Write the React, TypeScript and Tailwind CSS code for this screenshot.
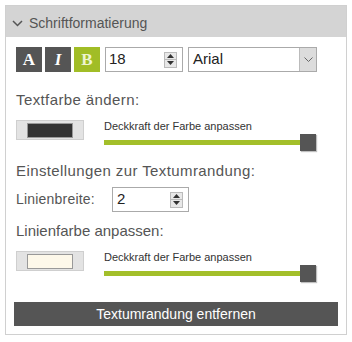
import React from "react";

function Spinner() {
  return (
    <div className="flex flex-col w-[13px] h-[16px] border border-[#bbb] bg-[#e8e8e8]">
      <div className="flex-1 flex items-center justify-center border-b border-[#bbb]">
        <svg width="7" height="4" viewBox="0 0 7 4"><path d="M0 4 L3.5 0 L7 4Z" fill="#333" /></svg>
      </div>
      <div className="flex-1 flex items-center justify-center">
        <svg width="7" height="4" viewBox="0 0 7 4"><path d="M0 0 L3.5 4 L7 0Z" fill="#333" /></svg>
      </div>
    </div>
  );
}

function Slider() {
  return (
    <div className="relative w-[212px] h-[17px] flex items-center">
      <div className="w-[200px] h-[5px] bg-[#a3bf2a]" />
      <div className="absolute right-[0px] top-0 w-[16px] h-[17px] bg-[#555] shadow-[1px_1px_1px_rgba(0,0,0,0.25)]" />
    </div>
  );
}

function Swatch({ color }: { color: string }) {
  return (
    <div className="w-[68px] h-[20px] bg-[#e3e3e3] border border-[#cfcfcf] flex items-center justify-center">
      <div className="w-[46px] h-[15px] border border-[#999]" style={{ backgroundColor: color }} />
    </div>
  );
}

function ColorRow({ color }: { color: string }) {
  return (
    <div className="flex mt-[12px]">
      <Swatch color={color} />
      <div className="ml-[20px] flex flex-col">
        <span className="text-[11px] leading-[13px] text-[#333]">Deckkraft der Farbe anpassen</span>
        <div className="mt-[1px]"><Slider /></div>
      </div>
    </div>
  );
}

export default function App() {
  return (
    <div className="w-[352px] h-[342px] bg-white pt-[5px] pl-[5px] text-[#555]" style={{ fontFamily: '"Liberation Sans", Arial, sans-serif' }}>
      <div className="w-[342px] h-[330px] border border-[#d0d0d0] flex flex-col">
        <div className="h-[31px] bg-[#d4d4d4] flex items-center pl-[6px] gap-[6px] pt-[3px]">
          <svg width="11" height="7" viewBox="0 0 11 7"><path d="M1 1 L5.5 5.5 L10 1" stroke="#555" strokeWidth="1.5" fill="none" /></svg>
          <span className="text-[14px] text-[#555]">Schriftformatierung</span>
        </div>
        <div className="flex flex-col pl-[10px] pr-[7px]">
          <div className="flex items-center mt-[10px] h-[25px]">
            <div className="w-[26px] h-[25px] bg-[#555] text-white flex items-center justify-center font-bold text-[17px]" style={{ fontFamily: '"Liberation Serif", serif' }}>A</div>
            <div className="ml-[3px] w-[26px] h-[25px] bg-[#555] text-white flex items-center justify-center font-bold italic text-[17px]" style={{ fontFamily: '"Liberation Serif", serif' }}>I</div>
            <div className="ml-[3px] w-[26px] h-[25px] bg-[#a1bd26] text-[#eef4d0] flex items-center justify-center font-bold text-[17px]" style={{ fontFamily: '"Liberation Serif", serif' }}>B</div>
            <div className="ml-[5px] w-[78px] h-[25px] border border-[#aaa] flex items-center pl-[3px] pr-[5px] justify-between bg-white">
              <span className="text-[15px] text-[#222]">18</span>
              <Spinner />
            </div>
            <div className="ml-[5px] w-[129px] h-[25px] border border-[#aaa] flex items-center bg-white">
              <span className="flex-1 pl-[4px] text-[15px] text-[#222]">Arial</span>
              <div className="w-[17px] h-full bg-[#dcdcdc] border-l border-[#bbb] flex items-center justify-center">
                <svg width="9" height="5" viewBox="0 0 9 5"><path d="M0.5 0.5 L4.5 4.5 L8.5 0.5" stroke="#666" strokeWidth="1" fill="none" /></svg>
              </div>
            </div>
          </div>

          <div className="mt-[19px] text-[15px] leading-[17px] tracking-[0.4px]">Textfarbe ändern:</div>
          <ColorRow color="#333333" />

          <div className="mt-[11px] text-[15px] leading-[17px] tracking-[0.4px]">Einstellungen zur Textumrandung:</div>
          <div className="flex items-center mt-[8px]">
            <span className="text-[14px] tracking-[0.2px] w-[96px]">Linienbreite:</span>
            <div className="w-[77px] h-[25px] border border-[#aaa] flex items-center pl-[4px] pr-[5px] justify-between bg-white">
              <span className="text-[15px] text-[#222]">2</span>
              <Spinner />
            </div>
          </div>
          <div className="mt-[10px] text-[15px] leading-[17px]">Linienfarbe anpassen:</div>
          <ColorRow color="#fdf8ea" />
          <div className="mt-[20px] -ml-[2px] w-[324px] h-[24px] bg-[#555] text-white text-[14px] flex items-center justify-center">Textumrandung entfernen</div>
        </div>
      </div>
    </div>
  );
}
